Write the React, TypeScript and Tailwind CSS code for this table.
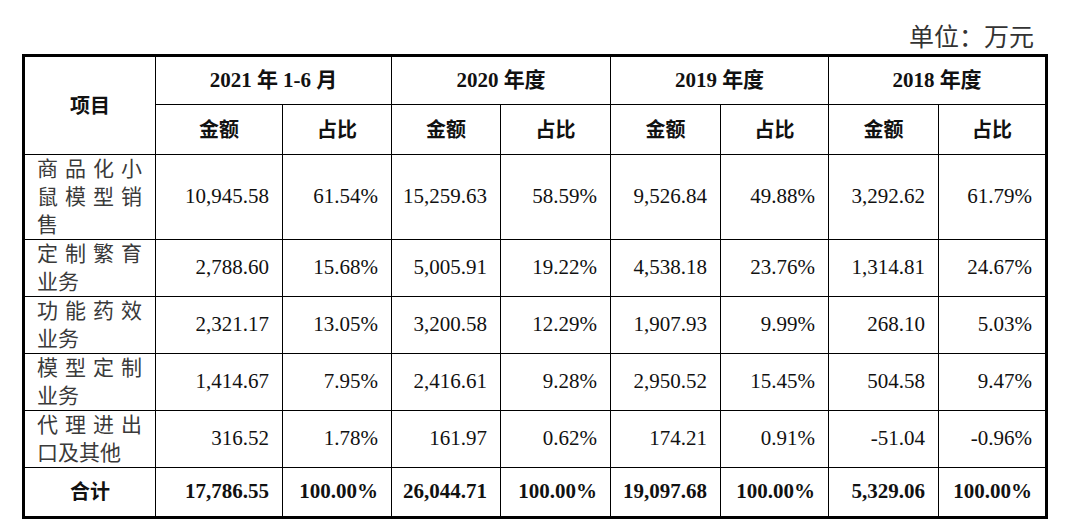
const font = { fontFamily: '"Liberation Serif", "Noto Sans CJK SC", serif' };

type Row = { label: string[]; values: string[] };

const rows: Row[] = [
  {
    label: ["商品化小", "鼠模型销", "售"],
    values: ["10,945.58", "61.54%", "15,259.63", "58.59%", "9,526.84", "49.88%", "3,292.62", "61.79%"],
  },
  {
    label: ["定制繁育", "业务"],
    values: ["2,788.60", "15.68%", "5,005.91", "19.22%", "4,538.18", "23.76%", "1,314.81", "24.67%"],
  },
  {
    label: ["功能药效", "业务"],
    values: ["2,321.17", "13.05%", "3,200.58", "12.29%", "1,907.93", "9.99%", "268.10", "5.03%"],
  },
  {
    label: ["模型定制", "业务"],
    values: ["1,414.67", "7.95%", "2,416.61", "9.28%", "2,950.52", "15.45%", "504.58", "9.47%"],
  },
  {
    label: ["代理进出", "口及其他"],
    values: ["316.52", "1.78%", "161.97", "0.62%", "174.21", "0.91%", "-51.04", "-0.96%"],
  },
];

const totals = ["17,786.55", "100.00%", "26,044.71", "100.00%", "19,097.68", "100.00%", "5,329.06", "100.00%"];
const periods = ["2021 年 1-6 月", "2020 年度", "2019 年度", "2018 年度"];

function Label({ lines }: { lines: string[] }) {
  return (
    <div className="bg-white pl-[12px] pr-[13px] flex flex-col justify-center text-[21px] leading-[28px] text-[#3a3a3a]">
      {lines.map((line, i) =>
        // every line but the last one is spread across the cell
        i < lines.length - 1 ? (
          <div key={i} className="flex justify-between">
            {line.split("").map((ch, j) => (
              <span key={j}>{ch}</span>
            ))}
          </div>
        ) : (
          <div key={i}>{line}</div>
        )
      )}
    </div>
  );
}

export default function App() {
  return (
    <div className="w-[1080px] h-[527px] bg-white pl-[22px]" style={font}>
      <div className="h-[54px] w-[1026px] flex justify-end items-start pt-[26px] pr-[14px] text-[25px] leading-[24px] text-[#333]">
        单位：万元
      </div>
      <div className="w-[1026px] border-[3px] border-black bg-black grid gap-px grid-cols-[130px_126px_108px_108px_109px_109px_107px_109px_106px] grid-rows-[47px_49px_84px_56px_56px_56px_56px_48px] text-[#111]">
        <div className="row-span-2 bg-white flex items-center justify-center text-[20px] font-bold">项目</div>
        {periods.map((p) => (
          <div key={p} className="col-span-2 bg-white flex items-center justify-center text-[21px] font-bold">
            {p}
          </div>
        ))}
        {periods.map((p) => (
          <div key={p} className="contents">
            <div className="bg-white flex items-center justify-center text-[20px] font-bold">金额</div>
            <div className="bg-white flex items-center justify-center text-[20px] font-bold">占比</div>
          </div>
        ))}
        {rows.map((r) => (
          <div key={r.label.join("")} className="contents">
            <Label lines={r.label} />
            {r.values.map((v, i) => (
              <div key={i} className="bg-white flex items-center justify-end pr-[13px] text-[21px]">
                {v}
              </div>
            ))}
          </div>
        ))}
        <div className="bg-white flex items-center justify-center text-[20px] font-bold">合计</div>
        {totals.map((v, i) => (
          <div key={i} className="bg-white flex items-center justify-end pr-[13px] text-[21px] font-bold">
            {v}
          </div>
        ))}
      </div>
    </div>
  );
}
